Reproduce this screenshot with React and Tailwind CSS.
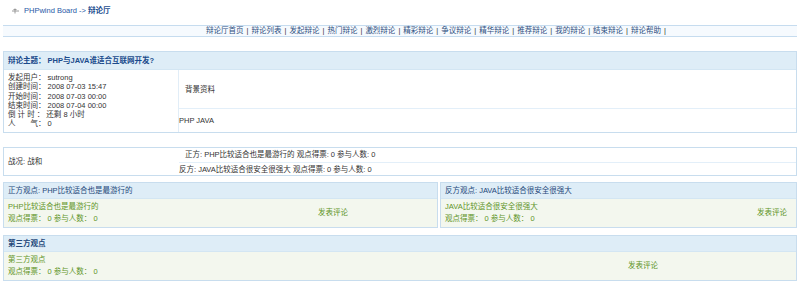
import React from 'react';

const navItems = ['辩论厅首页', '辩论列表', '发起辩论', '热门辩论', '激烈辩论', '精彩辩论', '争议辩论', '精华辩论', '推荐辩论', '我的辩论', '结束辩论', '辩论帮助'];

const info = [
  ['发起用户：', 'sutrong'],
  ['创建时间：', '2008 07-03 15:47'],
  ['开始时间：', '2008 07-03 00:00'],
  ['结束时间：', '2008 07-04 00:00'],
  ['倒 计 时 ：', '还剩 8 小时'],
  ['人　　气：', '0'],
];

const ViewBox = ({ title, text, bold, className, commentPad }) => (
  <div className={`border border-[#c8ddee] ${className}`}>
    <div className={`h-[16px] flex items-center pl-[4px] bg-[#deedf7] border-b border-[#d3e6f3] text-[#24487a] ${bold ? 'font-bold' : ''}`}>
      {title}
    </div>
    <div className="flex h-[28px] bg-[#f3f7ee] text-[#5f9527]">
      <div className="flex-1 pl-[4px] pt-[2px] leading-[12px]">
        <div>{text}</div>
        <div>观点得票： 0 参与人数： 0</div>
      </div>
      <div className={`flex items-center ${commentPad}`}>发表评论</div>
    </div>
  </div>
);

export default function App() {
  return (
    <div
      className="w-[798px] h-[287px] bg-white text-[7.5px] text-[#333] overflow-hidden"
      style={{ fontFamily: '"Liberation Sans", "Noto Sans CJK SC", sans-serif' }}
    >
      {/* breadcrumb */}
      <div className="h-[22px] flex items-center pl-[12px] gap-[5px] text-[#1f58a6]">
        <svg width="7" height="6" viewBox="0 0 7 6">
          <path d="M0 3h7M3 0.5v5M1.5 1.5h3" stroke="#9a9a9a" strokeWidth="1" fill="none" />
        </svg>
        <span>PHPwind Board -&gt; <b className="text-[#1b4d8f]">辩论厅</b></span>
      </div>

      {/* nav */}
      <div className="mt-[3px] ml-[3px] mr-[1px] h-[12px] flex items-center justify-end pr-[128px] bg-[#f6fafe] border-y border-[#c6dcef] text-[#2e4f80]">
        {navItems.map((n) => (
          <span key={n} className="whitespace-pre">
            {n}<span className="text-[#333] px-[3px]">|</span>
          </span>
        ))}
      </div>

      {/* topic */}
      <div className="mt-[14px] ml-[3px] mr-[1px] border border-[#c8ddee]">
        <div className="h-[18px] flex items-center pl-[4px] bg-[#deedf7] border-b border-[#d3e6f3] font-bold text-[#1b4b8c]">
          辩论主题： PHP与JAVA谁适合互联网开发?
        </div>
        <div className="flex h-[62px]">
          <div className="w-[175px] border-r border-[#e1edf7] pl-[4px] pt-[3px] leading-[9.3px]">
            {info.map(([k, v]) => (
              <div key={k} className="whitespace-pre">{k} {v}</div>
            ))}
          </div>
          <div className="flex-1 flex flex-col">
            <div className="h-[39px] flex items-center pl-[6px] pt-[2px] border-b border-[#e3eff9]">背景资料</div>
            <div className="flex-1 flex items-center">PHP JAVA</div>
          </div>
        </div>
      </div>

      {/* status */}
      <div className="mt-[14px] ml-[3px] mr-[1px] border border-[#c8ddee] flex h-[29px]">
        <div className="w-[175px] flex items-center pl-[4px] pt-[1px]">战况: 战和</div>
        <div className="flex-1 flex flex-col">
          <div className="h-[16px] flex items-center pl-[6px] border-b border-[#e3eff9]">
            正方: PHP比较适合也是最游行的 观点得票: 0 参与人数: 0
          </div>
          <div className="flex-1 flex items-center pt-[1px]">
            反方: JAVA比较适合很安全很强大 观点得票: 0 参与人数: 0
          </div>
        </div>
      </div>

      {/* sides */}
      <div className="mt-[6px] ml-[3px] mr-[1px] flex gap-[2px]">
        <ViewBox
          className="w-[435px]"
          title="正方观点: PHP比较适合也是最游行的"
          text="PHP比较适合也是最游行的"
          commentPad="pr-[89px]"
        />
        <ViewBox
          className="flex-1"
          title="反方观点: JAVA比较适合很安全很强大"
          text="JAVA比较适合很安全很强大"
          commentPad="pr-[9px]"
        />
      </div>

      {/* third */}
      <ViewBox
        className="mt-[7px] ml-[3px] mr-[1px]"
        bold
        title="第三方观点"
        text="第三方观点"
        commentPad="pr-[138px]"
      />
    </div>
  );
}
